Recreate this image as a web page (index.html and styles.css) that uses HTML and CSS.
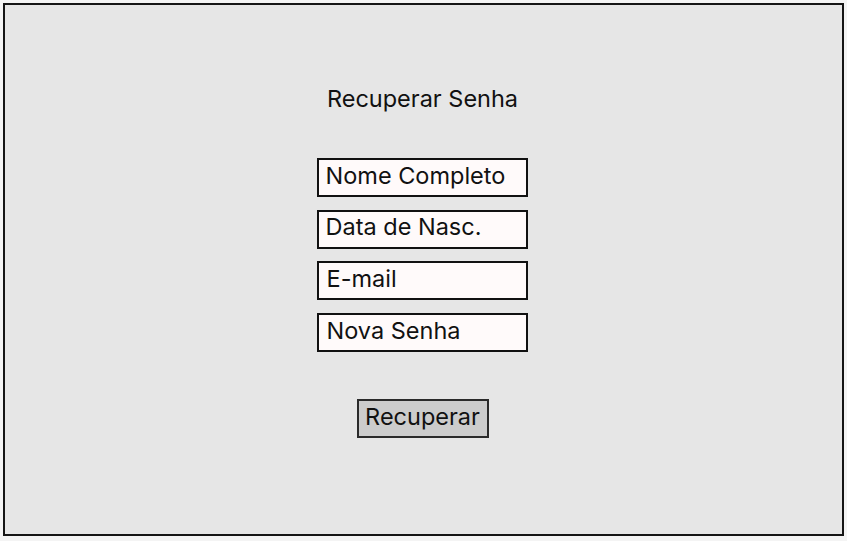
FILE: index.html
```html
<!DOCTYPE html>
<html lang="pt">
<head>
<meta charset="utf-8">
<title>Recuperar Senha</title>
<link rel="stylesheet" href="styles.css">
</head>
<body>
<main class="frame">
  <h1 class="title">Recuperar Senha</h1>
  <form class="form">
    <div class="field">Nome Completo</div>
    <div class="field">Data de Nasc.</div>
    <div class="field field-email">E-mail</div>
    <div class="field field-email">Nova Senha</div>
    <button type="button" class="btn">Recuperar</button>
  </form>
</main>
</body>
</html>
```

FILE: styles.css
```css
html, body {
  margin: 0;
  padding: 0;
  background: #f4f4f4;
}
body {
  font-family: Inter, "Noto Sans", sans-serif;
  color: #111;
  padding: 3px 3px 5px 3px;
  height: 541px;
  box-sizing: border-box;
}
.frame {
  box-sizing: border-box;
  height: 100%;
  border: 2px solid #151515;
  background: #e6e6e6;
  display: flex;
  flex-direction: column;
  align-items: center;
  padding-top: 80px;
}
.title {
  margin: 0;
  font-size: 23.5px;
  line-height: 28px;
  font-weight: 400;
  margin-right: 2px;
}
.form {
  margin-top: 45px;
  display: flex;
  flex-direction: column;
  align-items: center;
  gap: 12.7px;
}
.field {
  box-sizing: border-box;
  width: 211px;
  height: 39px;
  border: 2px solid #111;
  background: #fffafa;
  font-size: 23.5px;
  line-height: 30px;
  padding-left: 7px;
  padding-top: 0.5px;
  margin-right: 3px;
}
.field-email {
  padding-left: 8px;
}
.btn {
  box-sizing: border-box;
  margin-top: 34.5px;
  width: 132px;
  height: 39px;
  border: 2px solid #2a2a2a;
  background: #cccccc;
  font-family: Inter, "Noto Sans", sans-serif;
  font-size: 23.5px;
  line-height: 30px;
  color: #111;
  padding: 0 0 4px 0;
  margin-right: 2px;
}
```
